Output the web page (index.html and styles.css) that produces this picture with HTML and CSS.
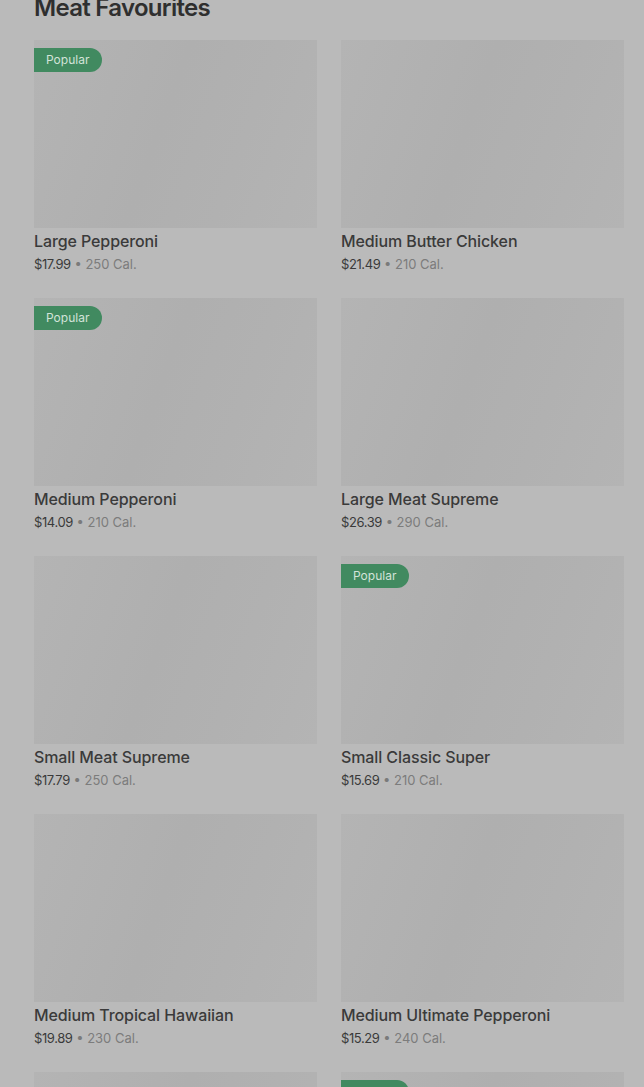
FILE: index.html
```html
<!DOCTYPE html>
<html>
<head>
<meta charset="utf-8">
<link rel="stylesheet" href="styles.css">
</head>
<body>
<div class="page">
  <h2 class="heading">Meat Favourites</h2>
  <div class="grid">
    <div class="card">
      <div class="thumb"><span class="badge">Popular</span></div>
      <div class="title">Large Pepperoni</div>
      <div class="meta"><span class="price">$17.99</span> • <span class="cal">250 Cal.</span></div>
    </div>
    <div class="card">
      <div class="thumb"></div>
      <div class="title">Medium Butter Chicken</div>
      <div class="meta"><span class="price">$21.49</span> • <span class="cal">210 Cal.</span></div>
    </div>
    <div class="card">
      <div class="thumb"><span class="badge">Popular</span></div>
      <div class="title">Medium Pepperoni</div>
      <div class="meta"><span class="price">$14.09</span> • <span class="cal">210 Cal.</span></div>
    </div>
    <div class="card">
      <div class="thumb"></div>
      <div class="title">Large Meat Supreme</div>
      <div class="meta"><span class="price">$26.39</span> • <span class="cal">290 Cal.</span></div>
    </div>
    <div class="card">
      <div class="thumb"></div>
      <div class="title">Small Meat Supreme</div>
      <div class="meta"><span class="price">$17.79</span> • <span class="cal">250 Cal.</span></div>
    </div>
    <div class="card">
      <div class="thumb"><span class="badge">Popular</span></div>
      <div class="title">Small Classic Super</div>
      <div class="meta"><span class="price">$15.69</span> • <span class="cal">210 Cal.</span></div>
    </div>
    <div class="card">
      <div class="thumb"></div>
      <div class="title">Medium Tropical Hawaiian</div>
      <div class="meta"><span class="price">$19.89</span> • <span class="cal">230 Cal.</span></div>
    </div>
    <div class="card">
      <div class="thumb"></div>
      <div class="title">Medium Ultimate Pepperoni</div>
      <div class="meta"><span class="price">$15.29</span> • <span class="cal">240 Cal.</span></div>
    </div>
    <div class="card">
      <div class="thumb"></div>
      <div class="title">Medium Pepperoni</div>
      <div class="meta"><span class="price">$14.09</span> • <span class="cal">210 Cal.</span></div>
    </div>
    <div class="card">
      <div class="thumb"><span class="badge">Popular</span></div>
      <div class="title">Large Pepperoni</div>
      <div class="meta"><span class="price">$17.99</span> • <span class="cal">250 Cal.</span></div>
    </div>
  </div>
</div>
</body>
</html>
```
FILE: styles.css
```css
html, body {
  margin: 0;
  padding: 0;
  background: #bababa;
  overflow: hidden;
  height: 1087px;
}
.page {
  padding: 0 20px 0 34px;
  font-family: Inter, "Noto Sans", sans-serif;
  color: #3a3a3a;
}
.heading {
  margin: -6px 0 0 0;
  height: 46px;
  font-size: 24px;
  line-height: 28px;
  font-weight: 600;
  letter-spacing: -0.7px;
  color: #2f2f2f;
}
.grid {
  display: grid;
  grid-template-columns: 283px 283px;
  column-gap: 24px;
  row-gap: 23px;
}
.card {
  display: flex;
  flex-direction: column;
}
.thumb {
  position: relative;
  height: 188px;
  background: linear-gradient(110deg, #b4b4b4 0%, #afafaf 45%, #b1b1b1 70%, #b4b4b4 100%);
}
.badge {
  position: absolute;
  left: 0;
  top: 8px;
  height: 24px;
  line-height: 24px;
  padding: 0 13px 0 12px;
  font-size: 12px;
  color: #d3e3d9;
  background: #418a60;
  border-radius: 0 12px 12px 0;
}
.title {
  margin-top: 3px;
  font-size: 16px;
  line-height: 20px;
  font-weight: 500;
  letter-spacing: -0.1px;
  color: #3a3a3a;
}
.meta {
  margin-top: 2px;
  font-size: 13px;
  line-height: 22px;
  color: #7a7a7a;
}
.price {
  color: #3a3a3a;
  letter-spacing: -0.4px;
}
.cal {
  color: #7c7c7c;
}
```
